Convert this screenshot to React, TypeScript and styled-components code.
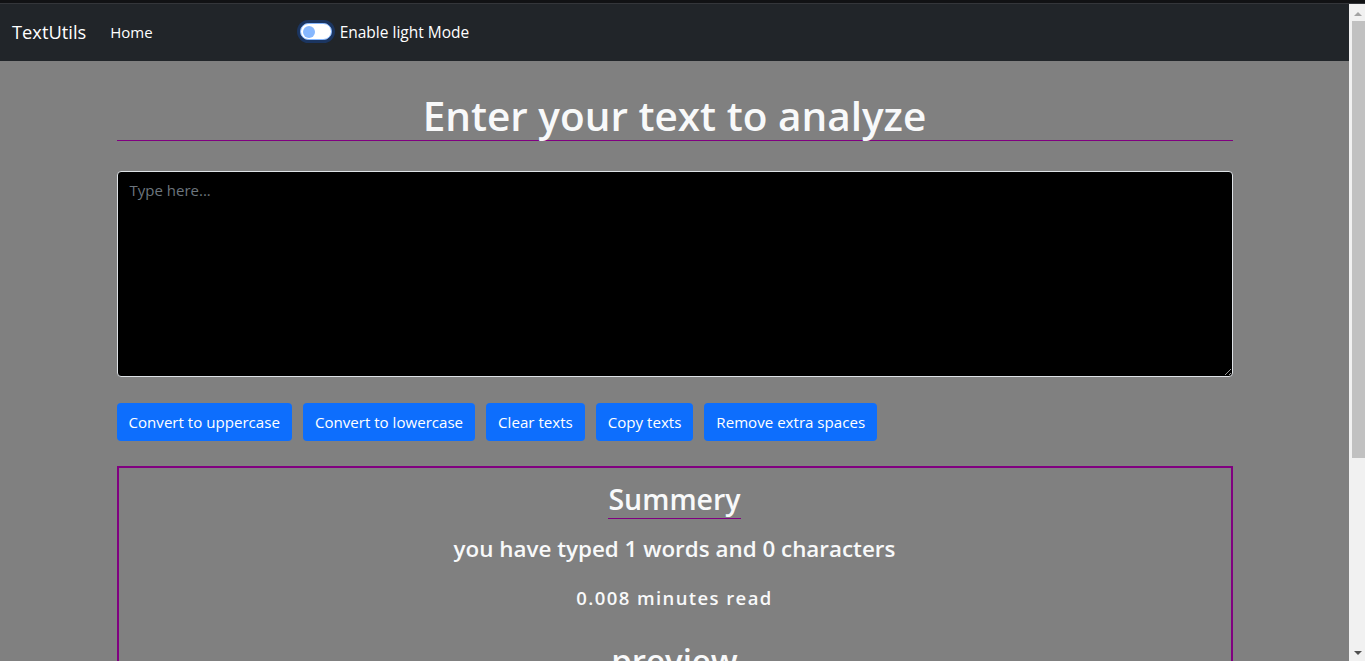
import React from "react";
import styled, { createGlobalStyle } from "styled-components";

const GlobalStyle = createGlobalStyle`
  *, *::before, *::after { box-sizing: border-box; }
  html, body { margin: 0; padding: 0; height: 100%; overflow: hidden; }
  body {
    font-family: "Open Sans", "Noto Sans", sans-serif;
    background: #0f0f0f;
    color: #f8f9fa;
  }
`;

const Page = styled.div`
  display: flex;
  flex-direction: column;
  height: 661px;
`;

const TopStrip = styled.div`
  height: 4px;
  flex: none;
  background: #111214;
  border-bottom: 1px solid #34363a;
`;

const Body = styled.div`
  flex: 1;
  display: flex;
  min-height: 0;
`;

const Viewport = styled.div`
  flex: 1;
  overflow: hidden;
  background: #808080;
`;

const ScrollBar = styled.div`
  width: 16px;
  flex: none;
  background: #f1f1f1;
  display: flex;
  flex-direction: column;
  align-items: center;
  padding: 8px 0 6px;
`;

const Arrow = styled.span<{ $down?: boolean }>`
  width: 0;
  height: 0;
  border-left: 4.5px solid transparent;
  border-right: 4.5px solid transparent;
  ${(p) =>
    p.$down
      ? "border-top: 4px solid #505050;"
      : "border-bottom: 4px solid #a3a3a3;"}
  margin-left: 1px;
`;

const Thumb = styled.div`
  width: 13px;
  height: 437px;
  margin: 5px 0 0 2px;
  background: #c1c1c1;
`;

const Spacer = styled.div`
  flex: 1;
`;

const Navbar = styled.nav`
  background: #212529;
  height: 57px;
  display: flex;
  align-items: center;
  padding: 0 12px;
`;

const Brand = styled.a`
  font-size: 18.3px;
  color: #fff;
  margin-right: 16px;
  text-decoration: none;
  line-height: 1;
  padding-bottom: 1px;
`;

const NavLink = styled.a`
  font-size: 15px;
  color: #fff;
  padding: 0 8px;
  text-decoration: none;
  line-height: 1;
`;

const SwitchWrap = styled.label`
  display: flex;
  align-items: center;
  gap: 8px;
  margin-left: 139px;
  margin-bottom: 2px;
  font-size: 15.5px;
  color: #fff;
`;

const SwitchTrack = styled.span`
  position: relative;
  width: 32px;
  height: 17px;
  border-radius: 9px;
  background: #fff;
  border: 1px solid #86b7fe;
  box-shadow: 0 0 0 3px #1b3560;

  &::after {
    content: "";
    position: absolute;
    left: 2px;
    top: 1.5px;
    width: 12px;
    height: 12px;
    border-radius: 50%;
    background: #86b7fe;
  }
`;

const Container = styled.main`
  width: 1116px;
  margin: 0 auto;
  padding-top: 31px;
  padding-bottom: 290px;
`;

const Heading = styled.h1`
  margin: 0;
  text-align: center;
  font-size: 40.5px;
  font-weight: 600;
  line-height: 48px;
  border-bottom: 1px solid #800080;
  color: #f8f9fa;
`;

const TextArea = styled.textarea`
  display: block;
  width: 100%;
  height: 206px;
  margin-top: 30px;
  background: #000;
  color: #fff;
  border: 1px solid #dee2e6;
  border-radius: 4px;
  padding: 6px 12px;
  font-family: "Open Sans", "Noto Sans", sans-serif;
  font-size: 15px;
  line-height: 24px;
  resize: vertical;
  outline: none;

  &::placeholder { color: #6c757d; }
`;

const ButtonRow = styled.div`
  display: flex;
  gap: 11px;
  margin-top: 26px;
`;

const Button = styled.button`
  height: 38px;
  padding: 0 12px;
  border: none;
  border-radius: 4px;
  background: #0d6efd;
  color: #fff;
  font-family: "Open Sans", "Noto Sans", sans-serif;
  font-size: 15.1px;
  cursor: pointer;
`;

const SummaryBox = styled.section`
  margin-top: 25px;
  border: 2px solid #800080;
  display: flex;
  flex-direction: column;
  align-items: center;
  padding-top: 12px;
`;

const SubHeading = styled.h2`
  margin: 0;
  font-size: 28.5px;
  font-weight: 600;
  line-height: 38px;
  border-bottom: 1px solid #800080;
  color: #f8f9fa;
`;

const Stat = styled.p`
  margin: 12px 0 0;
  font-size: 22.4px;
  font-weight: 600;
  line-height: 36px;
`;

const ReadTime = styled.p`
  margin: 16px 0 0;
  font-size: 18.5px;
  font-weight: 600;
  letter-spacing: 1.4px;
  line-height: 30px;
`;

const Preview = styled.h2`
  margin: 28px 0 0;
  font-size: 33px;
  font-weight: 600;
  line-height: 40px;
`;

const PreviewText = styled.p`
  margin: 8px 0 16px;
  font-size: 16px;
`;

export default function App() {
  const buttons = [
    "Convert to uppercase",
    "Convert to lowercase",
    "Clear texts",
    "Copy texts",
    "Remove extra spaces",
  ];
  return (
    <Page>
      <GlobalStyle />
      <TopStrip />
      <Body>
        <Viewport>
          <Navbar>
            <Brand href="#">TextUtils</Brand>
            <NavLink href="#">Home</NavLink>
            <SwitchWrap>
              <SwitchTrack />
              Enable light Mode
            </SwitchWrap>
          </Navbar>
          <Container>
            <Heading>Enter your text to analyze</Heading>
            <TextArea placeholder="Type here..." />
            <ButtonRow>
              {buttons.map((b) => (
                <Button key={b}>{b}</Button>
              ))}
            </ButtonRow>
            <SummaryBox>
              <SubHeading>Summery</SubHeading>
              <Stat>you have typed 1 words and 0 characters</Stat>
              <ReadTime>0.008 minutes read</ReadTime>
              <Preview>preview</Preview>
              <PreviewText>Nothing to preview!</PreviewText>
            </SummaryBox>
          </Container>
        </Viewport>
        <ScrollBar>
          <Arrow />
          <Thumb />
          <Spacer />
          <Arrow $down />
        </ScrollBar>
      </Body>
    </Page>
  );
}
